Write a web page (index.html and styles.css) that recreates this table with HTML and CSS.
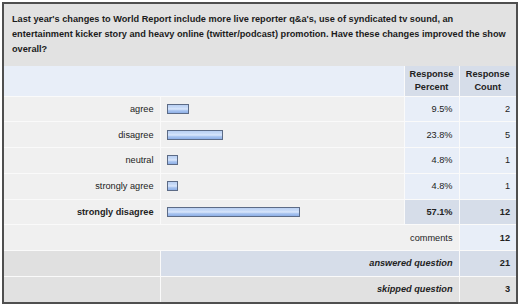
FILE: index.html
```html
<!DOCTYPE html>
<html lang="en">
<head>
  <meta charset="UTF-8" />
  <title>World Report survey results</title>
  <link rel="stylesheet" href="styles.css">
</head>
<body>
  <div class="survey">
    <div class="question">Last year's changes to World Report include more live reporter q&amp;a's, use of syndicated tv sound, an entertainment kicker story and heavy online (twitter/podcast) promotion. Have these changes improved the show overall?</div>
    <table class="results">
      <colgroup>
        <col class="col-label">
        <col class="col-bar">
        <col class="col-pct">
        <col class="col-count">
      </colgroup>
      <thead>
        <tr>
          <th colspan="2" class="blank"></th>
          <th>Response Percent</th>
          <th>Response Count</th>
        </tr>
      </thead>
      <tbody>
        <tr>
          <td class="label">agree</td>
          <td class="graph"><span class="bar" style="width: 22px"></span></td>
          <td class="num">9.5%</td>
          <td class="num">2</td>
        </tr>
        <tr>
          <td class="label">disagree</td>
          <td class="graph"><span class="bar" style="width: 56px"></span></td>
          <td class="num">23.8%</td>
          <td class="num">5</td>
        </tr>
        <tr>
          <td class="label">neutral</td>
          <td class="graph"><span class="bar" style="width: 11px"></span></td>
          <td class="num">4.8%</td>
          <td class="num">1</td>
        </tr>
        <tr>
          <td class="label">strongly agree</td>
          <td class="graph"><span class="bar" style="width: 11px"></span></td>
          <td class="num">4.8%</td>
          <td class="num">1</td>
        </tr>
        <tr class="top">
          <td class="label">strongly disagree</td>
          <td class="graph"><span class="bar" style="width: 133px"></span></td>
          <td class="num">57.1%</td>
          <td class="num">12</td>
        </tr>
        <tr class="comments">
          <td colspan="3" class="num">comments</td>
          <td class="num total">12</td>
        </tr>
        <tr class="answered">
          <td class="blank"></td>
          <td colspan="2" class="num summary">answered question</td>
          <td class="num total">21</td>
        </tr>
        <tr class="skipped">
          <td class="blank"></td>
          <td colspan="2" class="num summary">skipped question</td>
          <td class="num total">3</td>
        </tr>
      </tbody>
    </table>
  </div>
</body>
</html>
```

FILE: styles.css
```css
* {
  box-sizing: border-box;
}
body {
  margin: 0;
  font-family: 'Liberation Sans', Arial, sans-serif;
  color: #222;
  background: #fff;
}
.survey {
  margin: 2px;
  border: 2px solid #4f4f4f;
  background: #e2e2e2;
}
.question {
  padding: 8px 4px 9px 8px;
  font-size: 9.2px;
  font-weight: bold;
  line-height: 15px;
  color: #1c1c1c;
}
.results {
  width: 100%;
  table-layout: fixed;
  border-collapse: collapse;
  font-size: 9.2px;
}
.col-label { width: 156px; }
.col-bar { width: 244px; }
.col-pct { width: 55px; }
.results th,
.results td {
  border: 1px solid #fafafa;
  padding: 0 6px;
}
.results tr > :first-child { border-left: none; }
.results tr > :last-child { border-right: none; }
.results thead tr { height: 30px; }
.results thead th {
  border-top: none;
  background: #d6dde9;
  font-weight: bold;
  line-height: 13px;
  text-align: center;
  padding: 0 4px;
}
.results thead th.blank {
  background: #e8eef8;
}
.results tbody tr { height: 25.75px; }
.results tbody tr:last-child td { border-bottom: none; }
.label {
  text-align: right;
  background: #f0f0f0;
  padding-right: 5px;
}
.graph {
  background: #f0f0f0;
}
.bar {
  display: block;
  height: 10px;
  border: 1px solid #5c6b86;
  background: linear-gradient(#b9cff2, #c9dcf8 35%, #dbe7fb 50%, #a9c5f0 70%, #8eafe6);
}
.num {
  text-align: right;
  background: #e8eef8;
}
.top td { font-weight: bold; }
.top .num { background: #d6dde9; }
.comments td:first-child { background: #f0f0f0; }
.total { font-weight: bold; }
.summary {
  font-weight: bold;
  font-style: italic;
}
.answered .blank { background: #e0e0e0; }
.answered td.num { background: #d6dde9; }
.skipped td { background: #e1e1e1; }
```
